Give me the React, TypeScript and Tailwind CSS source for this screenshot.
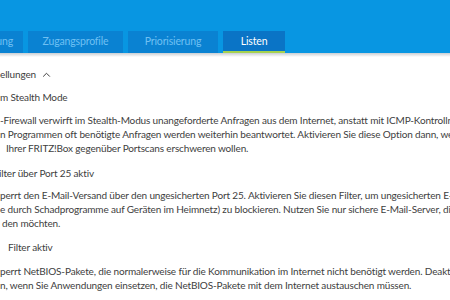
import type { ReactNode } from 'react';

/* ─── Tabs ─── */

const tabs = [
    { label: 'Kindersicherung', width: 'w-[84px] justify-end pr-[10px]', active: false },
    { label: 'Zugangsprofile', width: 'w-[95px] justify-center', active: false },
    { label: 'Priorisierung', width: 'w-[90px] justify-center', active: false },
    { label: 'Listen', width: 'w-[62px] justify-center', active: true },
];

function TabBar() {
    return (
        <header className="relative h-[53px] bg-[#0896e2]">
            <nav className="absolute bottom-0 left-[-61px] flex gap-[5px]">
                {tabs.map((tab) => (
                    <span
                        key={tab.label}
                        className={`flex h-[22px] items-center overflow-hidden whitespace-nowrap text-[10.5px] ${tab.width} ${
                            tab.active
                                ? 'border-b-2 border-[#a6d24e] bg-[#0a74c6] pt-[2px] text-white'
                                : 'bg-[#0a82d2] text-[#6fc0f2]'
                        }`}
                    >
                        {tab.label}
                    </span>
                ))}
            </nav>
        </header>
    );
}

/* ─── Text rows ─── */

function Line({
    children,
    className = '',
}: {
    children: ReactNode;
    className?: string;
}) {
    return (
        <div className={`h-[14px] whitespace-nowrap leading-[14px] ${className}`}>
            {children}
        </div>
    );
}

export default function App() {
    return (
        <div
            className="h-[300px] w-[450px] overflow-hidden bg-white text-[10px] tracking-[-0.15px] text-[#404040]"
            style={{ fontFamily: 'Lato, "Liberation Sans", sans-serif' }}
        >
            <TabBar />
            <div className="h-[4px] bg-gradient-to-b from-[#c9ced3] to-white" />

            <div className="pt-[10px]">
                <Line className="flex items-center gap-[6px]">
                    ellungen
                    <svg
                        viewBox="0 0 10 6"
                        className="h-[5px] w-[9px]"
                        fill="none"
                        stroke="#404040"
                        strokeWidth="1.2"
                    >
                        <path d="M1 5.5 5 1.5l4 4" />
                    </svg>
                </Line>

                <Line className="mt-[9px]">m Stealth Mode</Line>

                <div className="mt-[9px]">
                    <Line>
                        -Firewall verwirft im Stealth-Modus unangeforderte Anfragen aus dem
                        Internet, anstatt mit ICMP-Kontrollnachrichten zu antworten.
                    </Line>
                    <Line>
                        n Programmen oft benötigte Anfragen werden weiterhin beantwortet.
                        Aktivieren Sie diese Option dann, wenn Sie
                    </Line>
                    <Line className="pl-[6px]">
                        Ihrer FRITZ!Box gegenüber Portscans erschweren wollen.
                    </Line>
                </div>

                <Line className="mt-[11px] ml-[-1px]">ilter über Port 25 aktiv</Line>

                <div className="mt-[8px]">
                    <Line>
                        perrt den E-Mail-Versand über den ungesicherten Port 25. Aktivieren
                        Sie diesen Filter, um ungesicherten E-Mail-Versand
                    </Line>
                    <Line>
                        e durch Schadprogramme auf Geräten im Heimnetz) zu blockieren.
                        Nutzen Sie nur sichere E-Mail-Server, die Sie
                    </Line>
                    <Line className="pl-[2px]">den möchten.</Line>
                </div>

                <Line className="mt-[10px] pl-[8px]">Filter aktiv</Line>

                <div className="mt-[10px]">
                    <Line>
                        perrt NetBIOS-Pakete, die normalerweise für die Kommunikation im
                        Internet nicht benötigt werden. Deaktivieren Sie diesen Filter
                    </Line>
                    <Line>
                        n, wenn Sie Anwendungen einsetzen, die NetBIOS-Pakete mit dem
                        Internet austauschen müssen.
                    </Line>
                </div>
            </div>
        </div>
    );
}
